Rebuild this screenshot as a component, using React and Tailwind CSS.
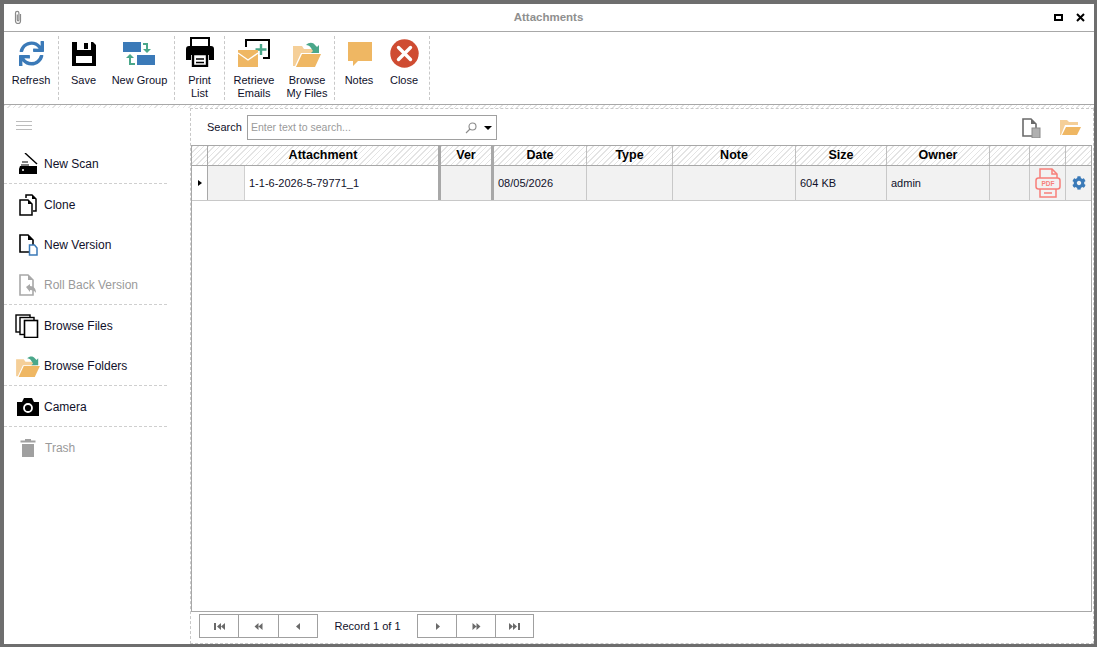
import React from "react";
import { FaSync, FaCog } from "react-icons/fa";

const hatch = "bg-[repeating-linear-gradient(135deg,#e4e4e4_0px,#e4e4e4_1px,#ffffff_1px,#ffffff_4px)]";
const Ico = ({ w, h, children, className = "" }) => (
  <svg width={w} height={h} viewBox={`0 0 ${w} ${h}`} className={"block shrink-0 " + className}>{children}</svg>
);

const FolderArrow = ({ arrow = true }) => (
  <Ico w={30} h={28}>
    <path d="M1 26V6h9l2 3h12v4H9L3 26z" fill="#f5cf98" />
    <path d="M4 27l6-13h19l-6 13z" fill="#efb763" />
    {arrow && <path d="M14 5c3-3 7-3 9 0l2 2 2-2v8h-8l2-2-2-3c-1-2-3-3-5-3z" fill="#4aa78a" />}
  </Ico>
);

const RibbonBtn = ({ w, icon, label }) => (
  <div className={`flex flex-col items-center shrink-0 ${w}`}>
    <div className="h-[35px] shrink-0 flex items-center justify-center">{icon}</div>
    <div className="mt-[3px] text-center text-[11px] leading-[13px] text-[#10102a]">
      {label.map((l) => <div key={l}>{l}</div>)}
    </div>
  </div>
);

const Group = ({ w, children }) => (
  <div className={`h-[64px] flex shrink-0 border-r border-dashed border-[#c8c8c8] ${w}`}>{children}</div>
);

const SideItem = ({ icon, label, muted, div }) => (
  <div className={`h-[40px] flex items-center box-content w-[163px] ${div ? "border-b border-dashed border-[#cfcfcf]" : ""}`}>
    <div className="w-[40px] flex justify-center shrink-0 pl-[8px] pt-[1px]">{icon}</div>
    <span className={`text-[12px] mt-[2px] ${muted ? "text-[#9a9a9a]" : "text-[#10102a]"}`}>{label}</span>
  </div>
);

const cols = [
  ["Attachment", "w-[230px]"],
  ["Ver", "w-[50px]"],
  ["Date", "w-[93px]"],
  ["Type", "w-[86px]"],
  ["Note", "w-[123px]"],
  ["Size", "w-[91px]"],
  ["Owner", "w-[103px]"],
  ["", "w-[40px]"],
  ["", "w-[36px]"],
  ["", "w-[25px]"],
];

const Thick = () => <div className="w-[3px] shrink-0 bg-[#a8a8a8]" />;

const Pager = ({ children, w }) => (
  <div className={`h-[24px] ${w} -ml-px first:ml-0 border border-[#a0a0a0] flex items-center justify-center`}>{children}</div>
);
const Tri = ({ d }) => (
  <Ico w={11} h={7}><path d={d} fill="#6a6a6a" /></Ico>
);

export default function App() {
  return (
    <div className="w-[1097px] h-[647px] box-border border-t-[4px] border-l-[4px] border-r-[3px] border-b-[3px] border-[#6e6e6e] bg-white flex flex-col overflow-hidden font-['Liberation_Sans',sans-serif]">
      {/* title bar */}
      <div className="h-[28px] shrink-0 flex items-center border-b border-[#a8a8a8]">
        <svg width="10" height="15" viewBox="0 0 10 15" className="ml-[9px]" fill="none" stroke="#8a8a8a" strokeWidth="1.2">
          <path d="M7.5 4v7a2.5 2.5 0 0 1-5 0V3a1.7 1.7 0 0 1 3.4 0v7a.8.8 0 0 1-1.6 0V4.5" />
        </svg>
        <div className="flex-1 text-center text-[11.5px] font-bold text-[#8f8f8f] pl-[20px]">Attachments</div>
        <div className="w-[9px] h-[7px] border-2 border-black mr-[13px]" />
        <svg width="9" height="9" viewBox="0 0 9 9" className="mr-[9px]" stroke="#000" strokeWidth="2"><path d="M1 1l7 7M8 1l-7 7" /></svg>
      </div>
      {/* ribbon */}
      <div className="h-[73px] shrink-0 flex pt-[4px] border-b border-[#a8a8a8]">
        <Group w="w-[55px]">
          <RibbonBtn w="w-[54px]" label={["Refresh"]} icon={<FaSync size={25} color="#3b7ab8" />} />
        </Group>
        <Group w="w-[116px]">
          <RibbonBtn w="w-[49px]" label={["Save"]} icon={
            <Ico w={24} h={24}>
              <path d="M0 0h21l3 3v21H0z" fill="#000" />
              <rect x="5" y="0" width="14" height="8" fill="#fff" />
              <rect x="12" y="1" width="4" height="6" fill="#000" />
              <rect x="4" y="14" width="16" height="7" fill="#fff" />
            </Ico>} />
          <RibbonBtn w="w-[63px]" label={["New Group"]} icon={
            <Ico w={33} h={24}>
              <rect x="0" y="0" width="18" height="10" fill="#3b7ab8" />
              <rect x="14" y="13" width="18" height="10" fill="#3b7ab8" />
              <path d="M20 1h5v6h3l-4 4-4-4h3V3h-3z" fill="#4aa78a" />
              <path d="M7 12l-4 4h3v7h6v-2H8v-5h3z" fill="#4aa78a" />
            </Ico>} />
        </Group>
        <Group w="w-[50px]">
          <RibbonBtn w="w-[49px]" label={["Print", "List"]} icon={
            <Ico w={28} h={30} className="-mt-[3px]">
              <path d="M5 10V1h18v9" fill="none" stroke="#000" strokeWidth="2" />
              <path d="M3 9h22a3 3 0 0 1 3 3v11h-5v-5H5v5H0V12a3 3 0 0 1 3-3z" fill="#000" />
              <path d="M7 17h14v12H7z" fill="#fff" stroke="#000" strokeWidth="2.4" />
              <path d="M10 22h8M10 25.5h8" stroke="#000" strokeWidth="1.6" />
            </Ico>} />
        </Group>
        <Group w="w-[110px]">
          <RibbonBtn w="w-[58px]" label={["Retrieve", "Emails"]} icon={
            <Ico w={33} h={29}>
              <path d="M8 8V1h23v18h-6" fill="none" stroke="#000" strokeWidth="2" />
              <path d="M23 5v11M17.5 10.500h11" stroke="#4aa78a" strokeWidth="2.4" />
              <rect x="0" y="11" width="20" height="17" fill="#efb763" />
              <path d="M0 14l10 7 10-7" fill="none" stroke="#fff" strokeWidth="1.4" />
            </Ico>} />
          <RibbonBtn w="w-[48px]" label={["Browse", "My Files"]} icon={<FolderArrow />} />
        </Group>
        <Group w="w-[95px]">
          <RibbonBtn w="w-[48px]" label={["Notes"]} icon={
            <Ico w={24} h={24} className="ml-[1px]">
              <path d="M0 0h24v19H10l-5 5v-5H0z" fill="#efb763" />
            </Ico>} />
          <RibbonBtn w="w-[42px]" label={["Close"]} icon={
            <Ico w={29} h={29}>
              <circle cx="14.500" cy="14.500" r="14.200" fill="#cf4c32" />
              <path d="M8.500 8.500l12 12M20.500 8.500l-12 12" stroke="#fff" strokeWidth="3.4" strokeLinecap="round" />
            </Ico>} />
        </Group>
      </div>
      {/* body */}
      <div className="flex-1 min-h-0 flex flex-col">
        <div className={`h-[3px] shrink-0 ${hatch}`} />
        <div className="flex-1 min-h-0 flex">
          {/* sidebar */}
          <div className="w-[186px] shrink-0 flex flex-col">
            <div className="h-[35px] pl-[12px] pt-[13px] shrink-0">
              <div className="w-[16px] h-[9px] border-t border-b border-[#bcbcbc] relative">
                <div className="absolute left-0 right-0 top-[3px] h-px bg-[#bcbcbc]" />
              </div>
            </div>
            <SideItem div label="New Scan" icon={
              <Ico w={19} h={21}>
                <path d="M6 0l12 11" stroke="#000" strokeWidth="1.4" />
                <path d="M1 13h17v8H0v-5z" fill="#000" />
                <path d="M3 9h6M2 12h8" stroke="#000" strokeWidth="1" />
                <circle cx="4" cy="17" r="1" fill="#fff" />
              </Ico>} />
            <SideItem label="Clone" icon={
              <Ico w={18} h={22}>
                <path d="M7 4V1h6l4 4v12h-3" fill="#fff" stroke="#000" strokeWidth="1.500" />
                <path d="M1 6h8l4 4v11H1z" fill="#fff" stroke="#000" strokeWidth="1.500" />
                <path d="M9 6v4h4zM13 1v4h4z" fill="#000" />
              </Ico>} />
            <SideItem label="New Version" icon={
              <Ico w={19} h={22}>
                <path d="M1 1h8l5 5v12H1z" fill="#fff" stroke="#000" strokeWidth="1.600" />
                <path d="M9 1v5h5z" fill="#000" />
                <path d="M10.500 11h5l2.500 3v7h-7.500z" fill="#fff" stroke="#3b7ab8" strokeWidth="1.500" />
              </Ico>} />
            <SideItem muted div label="Roll Back Version" icon={
              <Ico w={19} h={22}>
                <path d="M1 1h8l5 5v15H1z" fill="#fff" stroke="#a8a8a8" strokeWidth="1.600" />
                <path d="M9 1v5h5z" fill="#a8a8a8" />
                <path d="M7 13l4-3v2c4 0 6 3 6 7-1-2-3-3-6-3v2z" fill="#a8a8a8" />
              </Ico>} />
            <SideItem label="Browse Files" icon={
              <Ico w={24} h={24} className="-ml-[2px]">
                <rect x="1" y="1" width="14" height="17" fill="#fff" stroke="#000" strokeWidth="1.400" />
                <rect x="5" y="3.500" width="14" height="17" fill="#fff" stroke="#000" strokeWidth="1.400" />
                <rect x="9.500" y="6.500" width="13" height="17" fill="#fff" stroke="#000" strokeWidth="1.600" />
              </Ico>} />
            <SideItem div label="Browse Folders" icon={<span className="-ml-[1px] scale-[0.85] block"><FolderArrow /></span>} />
            <SideItem div label="Camera" icon={
              <Ico w={22} h={18} className="-ml-[1px]">
                <path d="M0 4h5l2-4h8l2 4h5v14H0z" fill="#000" />
                <circle cx="11" cy="10" r="4" fill="#000" stroke="#fff" strokeWidth="1.800" />
              </Ico>} />
            <SideItem muted label={<span className="ml-px">Trash</span>} icon={
              <Ico w={16} h={19}>
                <path d="M5 1h6v1.500h4.500v2H.5v-2H5z" fill="#a0a0a0" />
                <rect x="2" y="6" width="12" height="13" fill="#a0a0a0" />
              </Ico>} />
          </div>
          {/* main */}
          <div className="flex-1 min-w-0 border border-dashed border-[#c8c8c8] flex flex-col">
            <div className="h-[36px] shrink-0 flex items-start">
              <span className="ml-[16px] w-[34px] mt-[11px] text-[11px] leading-[14px] text-[#10102a]">Search</span>
              <div className="ml-[6px] mt-[6px] w-[250px] h-[25px] border border-[#a0a0a0] flex items-center">
                <span className="ml-[3px] flex-1 text-[10.5px] text-[#9a9a9a]">Enter text to search...</span>
                <svg width="12" height="12" viewBox="0 0 12 12" fill="none" stroke="#8a8a8a" strokeWidth="1.100" className="mr-[7px]">
                  <circle cx="7.500" cy="4.500" r="3.500" /><path d="M5 7l-4 4" />
                </svg>
                <div className="mr-[4px] w-0 h-0 border-l-[4px] border-r-[4px] border-t-[4px] border-l-transparent border-r-transparent border-t-black" />
              </div>
              <div className="ml-auto mt-[9px] flex items-start">
                <Ico w={19} h={20}>
                  <path d="M1 1h8l5 5v12H1z" fill="#fff" stroke="#6a6a6a" strokeWidth="1.600" />
                  <path d="M9 1v5h5z" fill="#6a6a6a" />
                  <rect x="10" y="10" width="8" height="10" fill="#b0b0b0" stroke="#8a8a8a" />
                </Ico>
                <span className="block ml-[18px] mr-[12px] mt-[1px]">
                  <Ico w={22} h={17}>
                    <path d="M1 16V1h7l2 2h9v3H6L2 16z" fill="#f5cf98" />
                    <path d="M3 16l4-8h15l-4 8z" fill="#efb763" />
                  </Ico>
                </span>
              </div>
            </div>
            {/* grid */}
            <div className="flex-1 min-h-0 mr-[1px] border border-[#a8a8a8] flex flex-col">
              <div className="h-[20px] shrink-0 flex border-b border-[#a8a8a8] text-[12.5px] font-bold text-black">
                <div className={`w-[16px] shrink-0 border-r border-[#a8a8a8] ${hatch}`} />
                {cols.map(([c, w], i) => (
                  <React.Fragment key={i}>
                    <div className={`${w} shrink-0 box-border flex items-center justify-center ${i < 2 ? "" : "border-r border-[#c0c0c0] last:border-r-0"} ${hatch}`}>{c}</div>
                    {i < 2 && <Thick />}
                  </React.Fragment>
                ))}
              </div>
              <div className="h-[35px] shrink-0 flex border-b border-[#c8c8c8] bg-[#f2f2f2] text-[11px] text-[#10102a]">
                <div className="w-[16px] shrink-0 border-r border-[#a8a8a8] flex items-center justify-center bg-white">
                  <div className="w-0 h-0 border-t-[3.5px] border-b-[3.5px] border-l-[4px] border-t-transparent border-b-transparent border-l-black" />
                </div>
                <div className="w-[230px] shrink-0 flex">
                  <div className="w-[36px] shrink-0" />
                  <div className="flex-1 bg-white border-l border-[#d0d0d0] flex items-center pl-[4px]">1-1-6-2026-5-79771_1</div>
                </div>
                <Thick />
                <div className="w-[50px] shrink-0" />
                <Thick />
                <div className="w-[93px] shrink-0 border-r border-[#c8c8c8] flex items-center pl-[4px]">08/05/2026</div>
                <div className="w-[86px] shrink-0 border-r border-[#c8c8c8]" />
                <div className="w-[123px] shrink-0 border-r border-[#c8c8c8]" />
                <div className="w-[91px] shrink-0 border-r border-[#c8c8c8] flex items-center pl-[4px]">604 KB</div>
                <div className="w-[103px] shrink-0 border-r border-[#c8c8c8] flex items-center pl-[4px]">admin</div>
                <div className="w-[40px] shrink-0 border-r border-[#c8c8c8]" />
                <div className="w-[36px] shrink-0 border-r border-[#c8c8c8] flex items-center justify-center">
                  <svg width="26" height="30" viewBox="0 0 26 30" fill="none" stroke="#f77f7a" strokeWidth="1.500">
                    <path d="M5 10V1h12l5 5v4" />
                    <path d="M17 1v5h5" />
                    <rect x="1" y="10" width="24" height="11" rx="2.500" />
                    <path d="M5 21v8h16v-8M9 25h8" />
                    <text x="13" y="18" textAnchor="middle" fontSize="6.500" fontWeight="700" fill="#f77f7a" stroke="none" fontFamily="Liberation Sans">PDF</text>
                  </svg>
                </div>
                <div className="w-[25px] shrink-0 flex items-center justify-center"><FaCog size={14} color="#3b7ab8" /></div>
              </div>
            </div>
            {/* pager */}
            <div className="h-[31px] shrink-0 flex items-start pt-[2px] pl-[8px]">
              <div className="flex">
                <Pager w="w-[40px]"><Tri d="M0 0h2v7H0zM7 0v7L3 3.500zM11 0v7L7 3.500z" /></Pager>
                <Pager w="w-[41px]"><Tri d="M5.500 0v7L1.500 3.500zM9.500 0v7L5.500 3.500z" /></Pager>
                <Pager w="w-[40px]"><Tri d="M7 0v7L3 3.500z" /></Pager>
              </div>
              <div className="w-[99px] h-[24px] flex items-center justify-center text-[11px] text-[#10102a]">Record 1 of 1</div>
              <div className="flex">
                <Pager w="w-[40px]"><Tri d="M4 0v7l4-3.500z" /></Pager>
                <Pager w="w-[40px]"><Tri d="M1.500 0v7l4-3.500zM5.500 0v7l4-3.500z" /></Pager>
                <Pager w="w-[39px]"><Tri d="M0 0v7l4-3.500zM4 0v7l4-3.500zM9 0h2v7H9z" /></Pager>
              </div>
            </div>
          </div>
        </div>
      </div>
    </div>
  );
}
